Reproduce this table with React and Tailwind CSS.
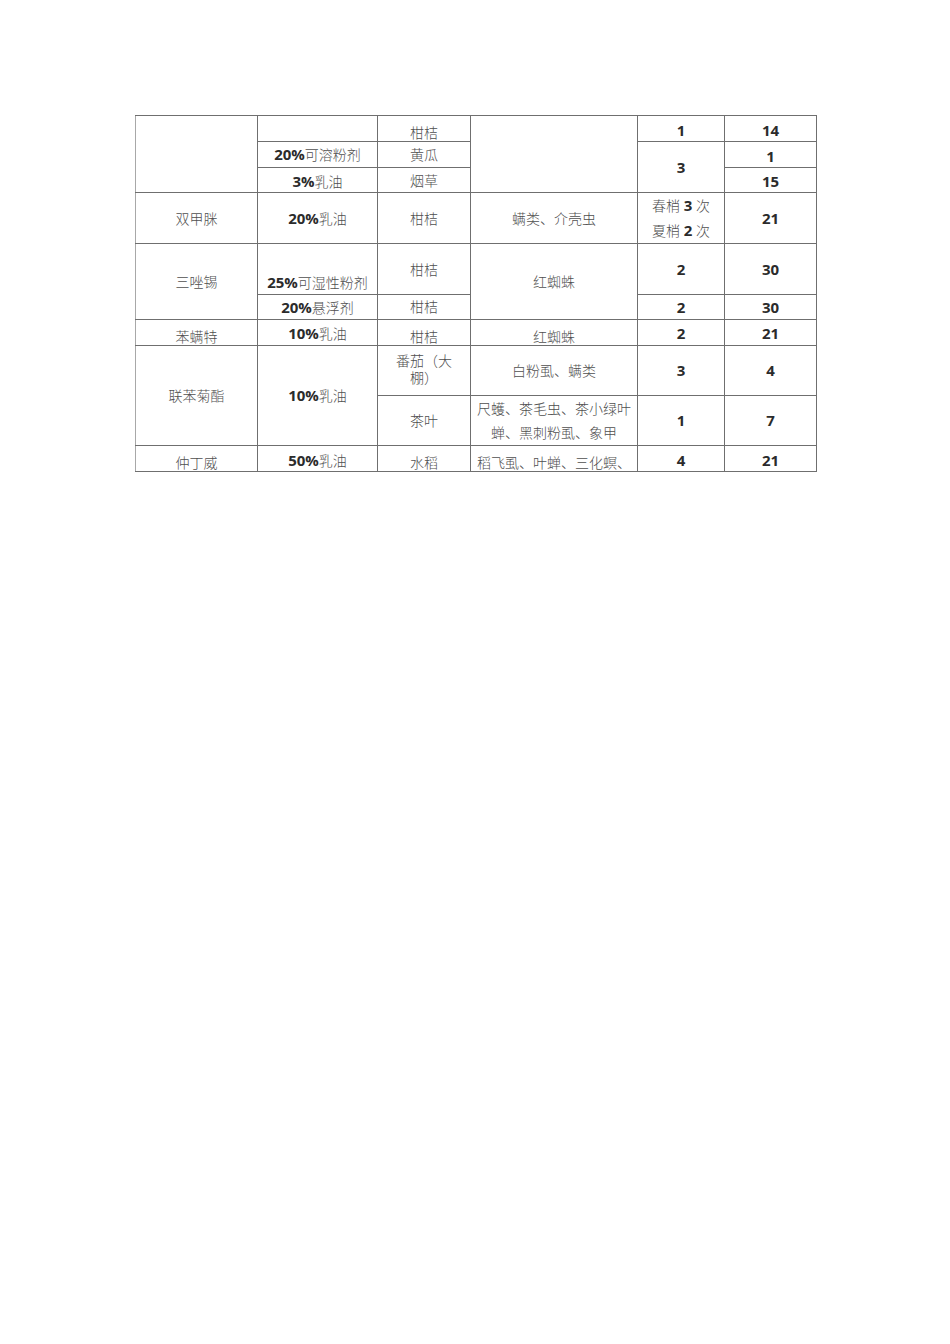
import React from 'react';

const font = { fontFamily: '"Open Sans", "Noto Sans CJK SC", sans-serif' };

// 数字部分加粗
const B = ({ children }) => <span className="font-bold text-[15px] text-[#2b2b2b]">{children}</span>;

const base = "border border-[#6f6f6f] text-center p-0 text-[14px] text-[#4f4f4f] font-light";
const td = `${base} align-middle`;
const first = `${td} border-l-[#a8a8a8]`;

export default function App() {
    return (
        <div className="w-[950px] h-[1344px] bg-white pt-[115px] pl-[135px]" style={font}>
            <table className="border-collapse table-fixed w-[681px]">
                <colgroup>
                    <col className="w-[122px]" />
                    <col className="w-[120px]" />
                    <col className="w-[93px]" />
                    <col className="w-[167px]" />
                    <col className="w-[87px]" />
                    <col className="w-[92px]" />
                </colgroup>
                <tbody>
                    <tr className="h-[26px]">
                        <td rowSpan={3} className={first}></td>
                        <td className={td}></td>
                        <td className={`${td} pt-2 leading-none`}>柑桔</td>
                        <td rowSpan={3} className={td}></td>
                        <td className={`${td} pt-1 leading-none`}><B>1</B></td>
                        <td className={`${td} pt-1 leading-none`}><B>14</B></td>
                    </tr>
                    <tr className="h-[26px]">
                        <td className={`${td} leading-none`}><B>20%</B>可溶粉剂</td>
                        <td className={`${td} leading-none`}>黄瓜</td>
                        <td rowSpan={2} className={td}><B>3</B></td>
                        <td className={`${td} pt-1 leading-none`}><B>1</B></td>
                    </tr>
                    <tr className="h-[25px]">
                        <td className={`${td} pt-0.5 leading-none`}><B>3%</B>乳油</td>
                        <td className={`${td} pt-0.5 leading-none`}>烟草</td>
                        <td className={`${td} pt-0.5 leading-none`}><B>15</B></td>
                    </tr>
                    <tr className="h-[51px]">
                        <td className={first}>双甲脒</td>
                        <td className={td}><B>20%</B>乳油</td>
                        <td className={td}>柑桔</td>
                        <td className={td}>螨类、介壳虫</td>
                        <td className={`${td} leading-[25px]`}>
                            春梢 <B>3</B> 次<br />夏梢 <B>2</B> 次
                        </td>
                        <td className={td}><B>21</B></td>
                    </tr>
                    <tr className="h-[51px]">
                        <td rowSpan={2} className={first}>三唑锡</td>
                        <td className={`${base} align-bottom pb-[4px] leading-none`}><B>25%</B>可湿性粉剂</td>
                        <td className={td}>柑桔</td>
                        <td rowSpan={2} className={td}>红蜘蛛</td>
                        <td className={td}><B>2</B></td>
                        <td className={td}><B>30</B></td>
                    </tr>
                    <tr className="h-[25px]">
                        <td className={`${td} leading-none`}><B>20%</B>悬浮剂</td>
                        <td className={`${td} leading-none`}>柑桔</td>
                        <td className={`${td} leading-none`}><B>2</B></td>
                        <td className={`${td} leading-none`}><B>30</B></td>
                    </tr>
                    <tr className="h-[26px]">
                        <td className={`${first} pt-2 leading-none`}>苯螨特</td>
                        <td className={`${td} pt-0.5 leading-none`}><B>10%</B>乳油</td>
                        <td className={`${td} pt-2 leading-none`}>柑桔</td>
                        <td className={`${td} pt-2 leading-none`}>红蜘蛛</td>
                        <td className={`${td} pt-0.5 leading-none`}><B>2</B></td>
                        <td className={`${td} pt-0.5 leading-none`}><B>21</B></td>
                    </tr>
                    <tr className="h-[50px]">
                        <td rowSpan={2} className={first}>联苯菊酯</td>
                        <td rowSpan={2} className={td}><B>10%</B>乳油</td>
                        <td className={`${td} leading-[17px] pb-1`}>番茄（大<br />棚）</td>
                        <td className={td}>白粉虱、螨类</td>
                        <td className={td}><B>3</B></td>
                        <td className={td}><B>4</B></td>
                    </tr>
                    <tr className="h-[50px]">
                        <td className={td}>茶叶</td>
                        <td className={`${td} leading-[24px]`}>尺蠖、茶毛虫、茶小绿叶<br />蝉、黑刺粉虱、象甲</td>
                        <td className={td}><B>1</B></td>
                        <td className={td}><B>7</B></td>
                    </tr>
                    <tr className="h-[26px]">
                        <td className={`${first} pt-2 leading-none`}>仲丁威</td>
                        <td className={`${td} pt-1 leading-none`}><B>50%</B>乳油</td>
                        <td className={`${td} pt-2 leading-none`}>水稻</td>
                        <td className={`${td} pt-2 leading-none`}>稻飞虱、叶蝉、三化螟、</td>
                        <td className={`${td} pt-1 leading-none`}><B>4</B></td>
                        <td className={`${td} pt-1 leading-none`}><B>21</B></td>
                    </tr>
                </tbody>
            </table>
        </div>
    );
}
